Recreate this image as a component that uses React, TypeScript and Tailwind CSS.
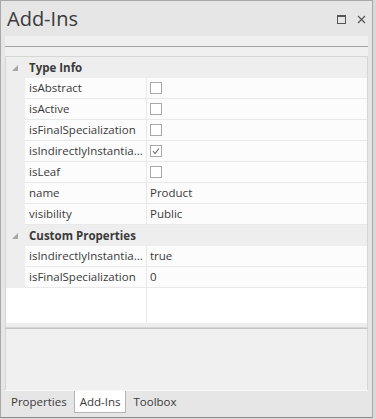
import React from "react";

type Row = { label: string; kind: "check" | "text"; value?: string; checked?: boolean };

const typeInfo: Row[] = [
  { label: "isAbstract", kind: "check" },
  { label: "isActive", kind: "check" },
  { label: "isFinalSpecialization", kind: "check" },
  { label: "isIndirectlyInstantia...", kind: "check", checked: true },
  { label: "isLeaf", kind: "check" },
  { label: "name", kind: "text", value: "Product" },
  { label: "visibility", kind: "text", value: "Public" },
];

const custom: Row[] = [
  { label: "isIndirectlyInstantia...", kind: "text", value: "true" },
  { label: "isFinalSpecialization", kind: "text", value: "0" },
];

function Tri() {
  return (
    <svg width="6" height="6" viewBox="0 0 6 6" className="block">
      <polygon points="6,0 6,6 0,6" fill="#a6a6a6" />
    </svg>
  );
}

function Group({ title }: { title: string }) {
  return (
    <div className="flex h-[21px] items-center bg-[#eeeeee]">
      <div className="flex w-[19px] justify-end pr-[7px] pt-[1px]">
        <Tri />
      </div>
      <div className="pl-[4px] font-bold text-[#3a3a3a]">{title}</div>
    </div>
  );
}

function Check({ checked }: { checked?: boolean }) {
  return (
    <div className="flex h-[12px] w-[12px] items-center justify-center border border-[#a9a9a9] bg-white">
      {checked && (
        <svg width="10" height="10" viewBox="0 0 10 10">
          <polyline points="2,5 4,7.5 8,2.5" fill="none" stroke="#6a6a6a" strokeWidth="1.1" />
        </svg>
      )}
    </div>
  );
}

function DataRow({ row }: { row: Row }) {
  return (
    <div className="flex h-[21px]">
      <div className="w-[19px] bg-[#eeeeee]" />
      <div className="flex w-[122px] items-center border-b border-r border-[#e9e9e9] bg-[#fcfcfc] pl-[4px] text-[#3a3a3a]">
        {row.label}
      </div>
      <div className="flex flex-1 items-center border-b border-[#e9e9e9] bg-[#fcfcfc] pl-[3px] text-[#3a3a3a]">
        {row.kind === "check" ? <Check checked={row.checked} /> : row.value}
      </div>
    </div>
  );
}

export default function App() {
  return (
    <div
      className="h-[419px] w-[376px] bg-[#d9d9d9] text-[11.5px]"
      style={{ fontFamily: '"Open Sans", "Noto Sans", sans-serif' }}
    >
      <div className="flex h-[418px] w-[373px] flex-col border border-[#a8a8a8] border-b-[#8c8c8c] bg-[#e6e6e6]">
        {/* title */}
        <div className="flex h-[35px] items-center justify-between">
          <div className="pl-[6px] pt-[1px] text-[20px] text-[#3a3a3a]">Add-Ins</div>
          <div className="flex items-center gap-[11px] pr-[6px] pt-[2px]">
            <svg width="9" height="9" viewBox="0 0 9 9">
              <rect x="0.5" y="0.5" width="8" height="8" fill="none" stroke="#555" strokeWidth="1" />
              <line x1="0" y1="1.5" x2="9" y2="1.5" stroke="#555" strokeWidth="1" />
            </svg>
            <svg width="9" height="9" viewBox="0 0 9 9">
              <path d="M1 1 L8 8 M8 1 L1 8" stroke="#555" strokeWidth="1.2" />
            </svg>
          </div>
        </div>
        {/* content */}
        <div className="mx-[4px] flex flex-1 flex-col">
          <div className="h-[10px] bg-[#f0f0f0]" />
          <div className="h-[1px] bg-[#a3a3a3]" />
          <div className="h-[9px] bg-[#f0f0f0]" />
          <div className="flex flex-col border border-[#d6d6d6] bg-[#eeeeee]">
            <div className="flex h-[266px] flex-col bg-white">
              <Group title="Type Info" />
              {typeInfo.map((r, i) => (
                <DataRow key={i} row={r} />
              ))}
              <Group title="Custom Properties" />
              {custom.map((r, i) => (
                <DataRow key={i} row={r} />
              ))}
              <div className="flex flex-1">
                <div className="w-[141px] border-r border-[#e9e9e9]" />
              </div>
            </div>
            <div className="h-[4px] bg-[#eeeeee]" />
          </div>
          <div className="h-[1px] bg-[#c4c4c4]" />
          <div className="h-[61px] bg-[#f0f0f0] border-x border-[#d6d6d6]" />
          <div className="h-[1px] bg-[#f8f8f8]" />
          {/* tabs */}
          <div className="flex h-[22px] items-start text-[11.5px] text-[#3a3a3a]">
            <div className="flex h-[21px] items-center pl-[6px] pr-[7px]">Properties</div>
            <div className="flex h-[22px] items-center border-x border-b border-[#b4b4b4] bg-white px-[5px]">Add-Ins</div>
            <div className="flex h-[21px] items-center pl-[7px]">Toolbox</div>
          </div>
        </div>
      </div>
    </div>
  );
}
